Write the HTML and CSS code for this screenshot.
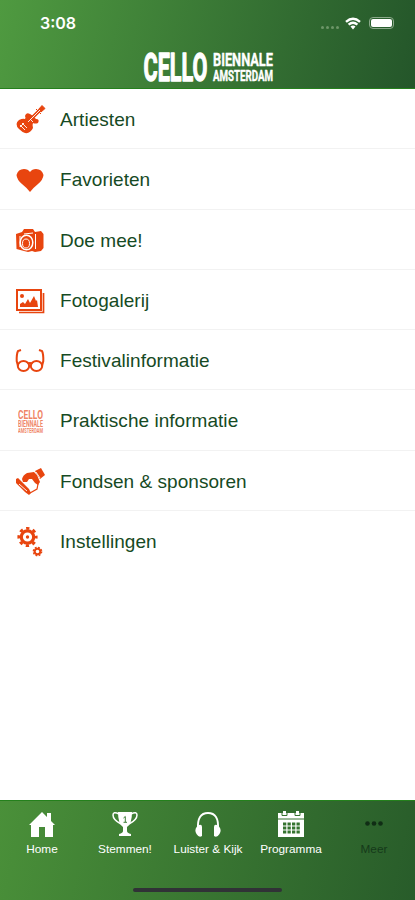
FILE: index.html
```
<!DOCTYPE html>
<html lang="nl">
    <head>
        <meta charset="UTF-8">
        <meta name="viewport" content="width=device-width, initial-scale=1">
        <title>Cello Biennale Amsterdam</title>
        <link rel="stylesheet" href="styles.css">
    </head>
    <body>
        <header class="header">
            <div class="status">
                <span class="time">3:08</span>
                <div class="status-icons">
                    <span class="signal"><i></i><i></i><i></i><i></i></span>
                    <svg class="wifi" width="16" height="13" viewBox="0 0 16 13">
                        <path d="M1 4.8Q8 -1.3 15 4.8M3.6 7.6Q8 3.8 12.4 7.6" fill="none" stroke="#fff" stroke-width="2.4"/>
                        <path d="M5.5 9.5Q8 7.5 10.500 9.5L8 12.5z" fill="#fff"/>
                    </svg>
                    <span class="battery"></span>
                </div>
            </div>
            <svg class="logo" width="132" height="32" viewBox="0 0 132 32">
                <text class="logo-cello" x="1.500" y="29.500" font-size="39" textLength="64" lengthAdjust="spacingAndGlyphs">CELLO</text>
                <text class="logo-small" x="71" y="15" font-size="19" textLength="60" lengthAdjust="spacingAndGlyphs">BIENNALE</text>
                <text class="logo-small" x="71" y="29.500" font-size="14.500" textLength="60" lengthAdjust="spacingAndGlyphs">AMSTERDAM</text>
            </svg>
        </header>
        <ul class="menu">
            <li>
                <svg class="icon" viewBox="0 0 30 30">
                    <path d="M4 15Q8 13 10 14Q11 13 10 11Q11 7 15 9L18 11L21 14Q25 14 23 18Q20 19 18 18Q17 20 18 23Q15 29 10 28Q7 27 4 24Q-1 19 4 15z"/>
                    <path d="M14 16L26 4" fill="none" stroke="#e8450f" stroke-width="3.4"/>
                    <path d="M24 4l3-3.500 3 3-4 3.500zM21 4l5 5" stroke="#e8450f"/>
                    <path d="M13 17L25 5M5 20l5 5M7 18l5 5M5 22l4-4M15 14l3 3" fill="none" stroke="#fff" stroke-width=".9"/>
                </svg>
                <span>Artiesten</span>
            </li>
            <li>
                <svg class="icon" viewBox="0 0 30 30">
                    <path d="M15 27Q12 23 7 19Q2 15 1.500 10Q3 4 9 4Q13 4 15 7Q17 4 21 4Q27 4 28.500 10Q28 15 23 19Q18 23 15 27z"/>
                </svg>
                <span>Favorieten</span>
            </li>
            <li>
                <svg class="icon" viewBox="0 0 30 30">
                    <path d="M1 8L7 6L9 3H18L20 6L26 5L28.500 8V22L26 25L20 26L17 25L13 26L9 25L1.500 23z"/>
                    <path d="M9 8L18 7M20.500 8V23M5 10V21" stroke="#fff" fill="none"/>
                    <ellipse cx="11.500" cy="16.500" rx="6.300" ry="7.300" fill="#e8450f" stroke="#fff" stroke-width="1.500"/>
                    <ellipse cx="11" cy="17.500" rx="3.500" ry="4.500" fill="none" stroke="#fff"/>
                </svg>
                <span>Doe mee!</span>
            </li>
            <li>
                <svg class="icon" viewBox="0 0 30 30">
                    <rect x="2" y="4" width="24" height="20" fill="none" stroke="#e8450f" stroke-width="2"/>
                    <path d="M28.500 7V26.500H4" fill="none" stroke="#e8450f" stroke-width="1.700"/>
                    <path d="M5 21V18L8 16L10 18L13 13L15 17L19 10L21 15L22 14L23 21z"/>
                    <circle cx="7" cy="10" r="2"/>
                </svg>
                <span>Fotogalerij</span>
            </li>
            <li>
                <svg class="icon" viewBox="0 0 30 30">
                    <g fill="none" stroke="#e8450f" stroke-width="2">
                        <ellipse cx="8.500" cy="20" rx="5.700" ry="5"/>
                        <ellipse cx="21.500" cy="20" rx="5.700" ry="5"/>
                        <path d="M13 18Q15 16 17 18M3 20L1.700 15Q1.500 8 3 5L6 4M27 20L28.300 15Q28.500 8 27 5L24 4"/>
                    </g>
                </svg>
                <span>Festivalinformatie</span>
            </li>
            <li>
                <svg class="icon icon-logo" viewBox="0 0 30 30">
                    <text x="3" y="12.500" font-size="12" textLength="25" lengthAdjust="spacingAndGlyphs">CELLO</text>
                    <text x="3" y="20.500" font-size="8.500" textLength="25" lengthAdjust="spacingAndGlyphs">BIENNALE</text>
                    <text x="3" y="27" font-size="6.500" textLength="25" lengthAdjust="spacingAndGlyphs">AMSTERDAM</text>
                </svg>
                <span>Praktische informatie</span>
            </li>
            <li>
                <svg class="icon" viewBox="0 0 30 30">
                    <path d="M7 12Q8 8 12 6L19 5L22 8L25 15L23 18L20 16L17 12L14 12L12 15L8 15z"/>
                    <path d="M20 4L26 1L30 8L25 12z"/>
                    <path d="M1 12L3 11L14 22L16 26L14 28L10 25L1 16z"/>
                    <path d="M21 5L25 11M4 17L12 24" fill="none" stroke="#fff" stroke-width=".9"/>
                    <path d="M15 26L22 22L23 17" fill="none" stroke="#e8450f" stroke-width="1.200"/>
                </svg>
                <span>Fondsen &amp; sponsoren</span>
            </li>
            <li>
                <svg class="icon" viewBox="0 0 30 30">
                    <g fill="none" stroke="#e8450f">
                        <circle cx="12.500" cy="10" r="6.200" stroke-width="3.200"/>
                        <circle cx="12.500" cy="10" r="8.700" stroke-width="2.800" stroke-dasharray="3.300 3.533" stroke-dashoffset="1.650"/>
                        <circle cx="22.500" cy="24.500" r="2.800" stroke-width="2"/>
                        <circle cx="22.500" cy="24.500" r="4.200" stroke-width="1.300" stroke-dasharray="1.900 1.400"/>
                    </g>
                    <circle cx="12.500" cy="10" r="1.700"/>
                </svg>
                <span>Instellingen</span>
            </li>
        </ul>
        <nav class="tabs">
            <div class="tab">
                <svg viewBox="0 0 28 28" width="28" height="28">
                    <path d="M1 15L14 2L19 7V3H23V11L27 15H25V27H17V17H11V27H3V15z"/>
                </svg>
                <span>Home</span>
            </div>
            <div class="tab">
                <svg viewBox="0 0 28 28" width="28" height="28">
                    <path d="M7 2H21Q21 14 16 17V21Q16 23 20 24V26H8V24Q12 23 12 21V17Q7 14 7 2z"/>
                    <path d="M8 4Q2 1 2 5Q2 10 10 14M20 4Q26 1 26 5Q26 10 18 14" fill="none" stroke="#fff" stroke-width="1.500"/>
                    <path d="M12.500 8L14.300 6.500V12M12.500 12.300H16" fill="none" stroke="#3d7d36" stroke-width="1"/>
                </svg>
                <span>Stemmen!</span>
            </div>
            <div class="tab">
                <svg viewBox="0 0 28 28" width="28" height="28">
                    <path d="M4 19Q3 3 14 3Q25 3 24 19" fill="none" stroke="#fff" stroke-width="1.900"/>
                    <path d="M5 15Q8 14 8 17V26Q5 28 2.500 24Q0 20 3 16.500zM23 15Q20 14 20 17V26Q23 28 25.500 24Q28 20 25 16.500z"/>
                </svg>
                <span>Luister &amp; Kijk</span>
            </div>
            <div class="tab">
                <svg viewBox="0 0 28 28" width="28" height="28">
                    <path d="M1 3H6V1H9V3H19V1H22V3H27V27H1z"/>
                    <path d="M1 9H27M5 3V5.500H10V3M18 3V5.500H23V3" fill="none" stroke="#35732f" stroke-width="1"/>
                    <path d="M6 14H23M6 18H23M6 22H23" fill="none" stroke="#35732f" stroke-width="2.800" stroke-dasharray="3.300 1.200"/>
                </svg>
                <span>Programma</span>
            </div>
            <div class="tab active">
                <svg viewBox="0 0 28 28" width="28" height="28">
                    <circle cx="7.500" cy="13.500" r="2.300"/>
                    <circle cx="14" cy="13.500" r="2.300"/>
                    <circle cx="20.500" cy="13.500" r="2.300"/>
                </svg>
                <span>Meer</span>
            </div>
            <div class="home-bar"></div>
        </nav>
    </body>
</html>
```
FILE: styles.css
```
* {
    box-sizing: border-box;
}
body {
    margin: 0;
    height: 900px;
    display: flex;
    flex-direction: column;
    background: #fff;
    font-family: "Liberation Sans", Arial, sans-serif;
    overflow: hidden;
}
.header {
    height: 89px;
    background: linear-gradient(102deg, #4f9a40 0%, #24562a 100%);
    border-bottom: 1px solid #24801c;
}
.status {
    height: 46px;
    padding: 0 21px 0 40px;
    display: flex;
    justify-content: space-between;
    align-items: center;
    color: #fff;
}
.time {
    font-family: Inter, "Liberation Sans", sans-serif;
    font-size: 16px;
    font-weight: 600;
}
.status-icons {
    display: flex;
    align-items: center;
}
.signal {
    display: flex;
    gap: 2px;
    margin: 9px 6px 0 0;
}
.signal i {
    width: 3px;
    height: 3px;
    border-radius: 50%;
    background: #6d9668;
}
.wifi {
    margin-right: 8px;
}
.battery {
    width: 25px;
    height: 12px;
    border: 1px solid #8aa98a;
    border-radius: 4px;
    background: #fff;
    background-clip: content-box;
    padding: 1px;
}
.logo {
    display: block;
    margin: 5px auto 0 142px;
    overflow: visible;
}
.logo text {
    font-family: Roboto, "Liberation Sans", sans-serif;
    font-weight: bold;
    fill: #fff;
    stroke: #fff;
    stroke-linejoin: round;
}
.logo .logo-cello {
    stroke-width: 1.3;
}
.logo .logo-small {
    stroke-width: .4;
}
.menu {
    flex: 1;
    margin: 0;
    padding: 0;
    list-style: none;
}
.menu li {
    height: 60.25px;
    padding: 3px 15px 0;
    display: flex;
    align-items: center;
    gap: 15px;
    border-bottom: 1px solid #f2f2f2;
    color: #164a24;
    font-size: 19px;
    letter-spacing: .04px;
}
.menu li:last-child {
    border-bottom: 0;
}
.icon {
    width: 30px;
    height: 30px;
    fill: #e8450f;
    overflow: visible;
}
.icon-logo {
    font-family: Roboto, "Liberation Sans", sans-serif;
    font-weight: bold;
    opacity: .65;
}
.tabs {
    height: 100px;
    display: grid;
    grid-template-columns: repeat(5, 1fr);
    grid-template-rows: 87px 4px;
    background: linear-gradient(102deg, #4a9039 0%, #285c2a 100%);
    border-top: 1px solid #24801c;
}
.tab {
    padding: 9px 0 0 1px;
    display: flex;
    flex-direction: column;
    align-items: center;
    gap: 4px;
    color: #fff;
    fill: #fff;
    font-size: 11.8px;
    white-space: nowrap;
}
.active {
    color: #15391a;
    fill: #102d15;
}
.home-bar {
    grid-column: 1 / -1;
    justify-self: center;
    width: 149px;
    height: 4px;
    border-radius: 2px;
    background: #303236;
}
```
